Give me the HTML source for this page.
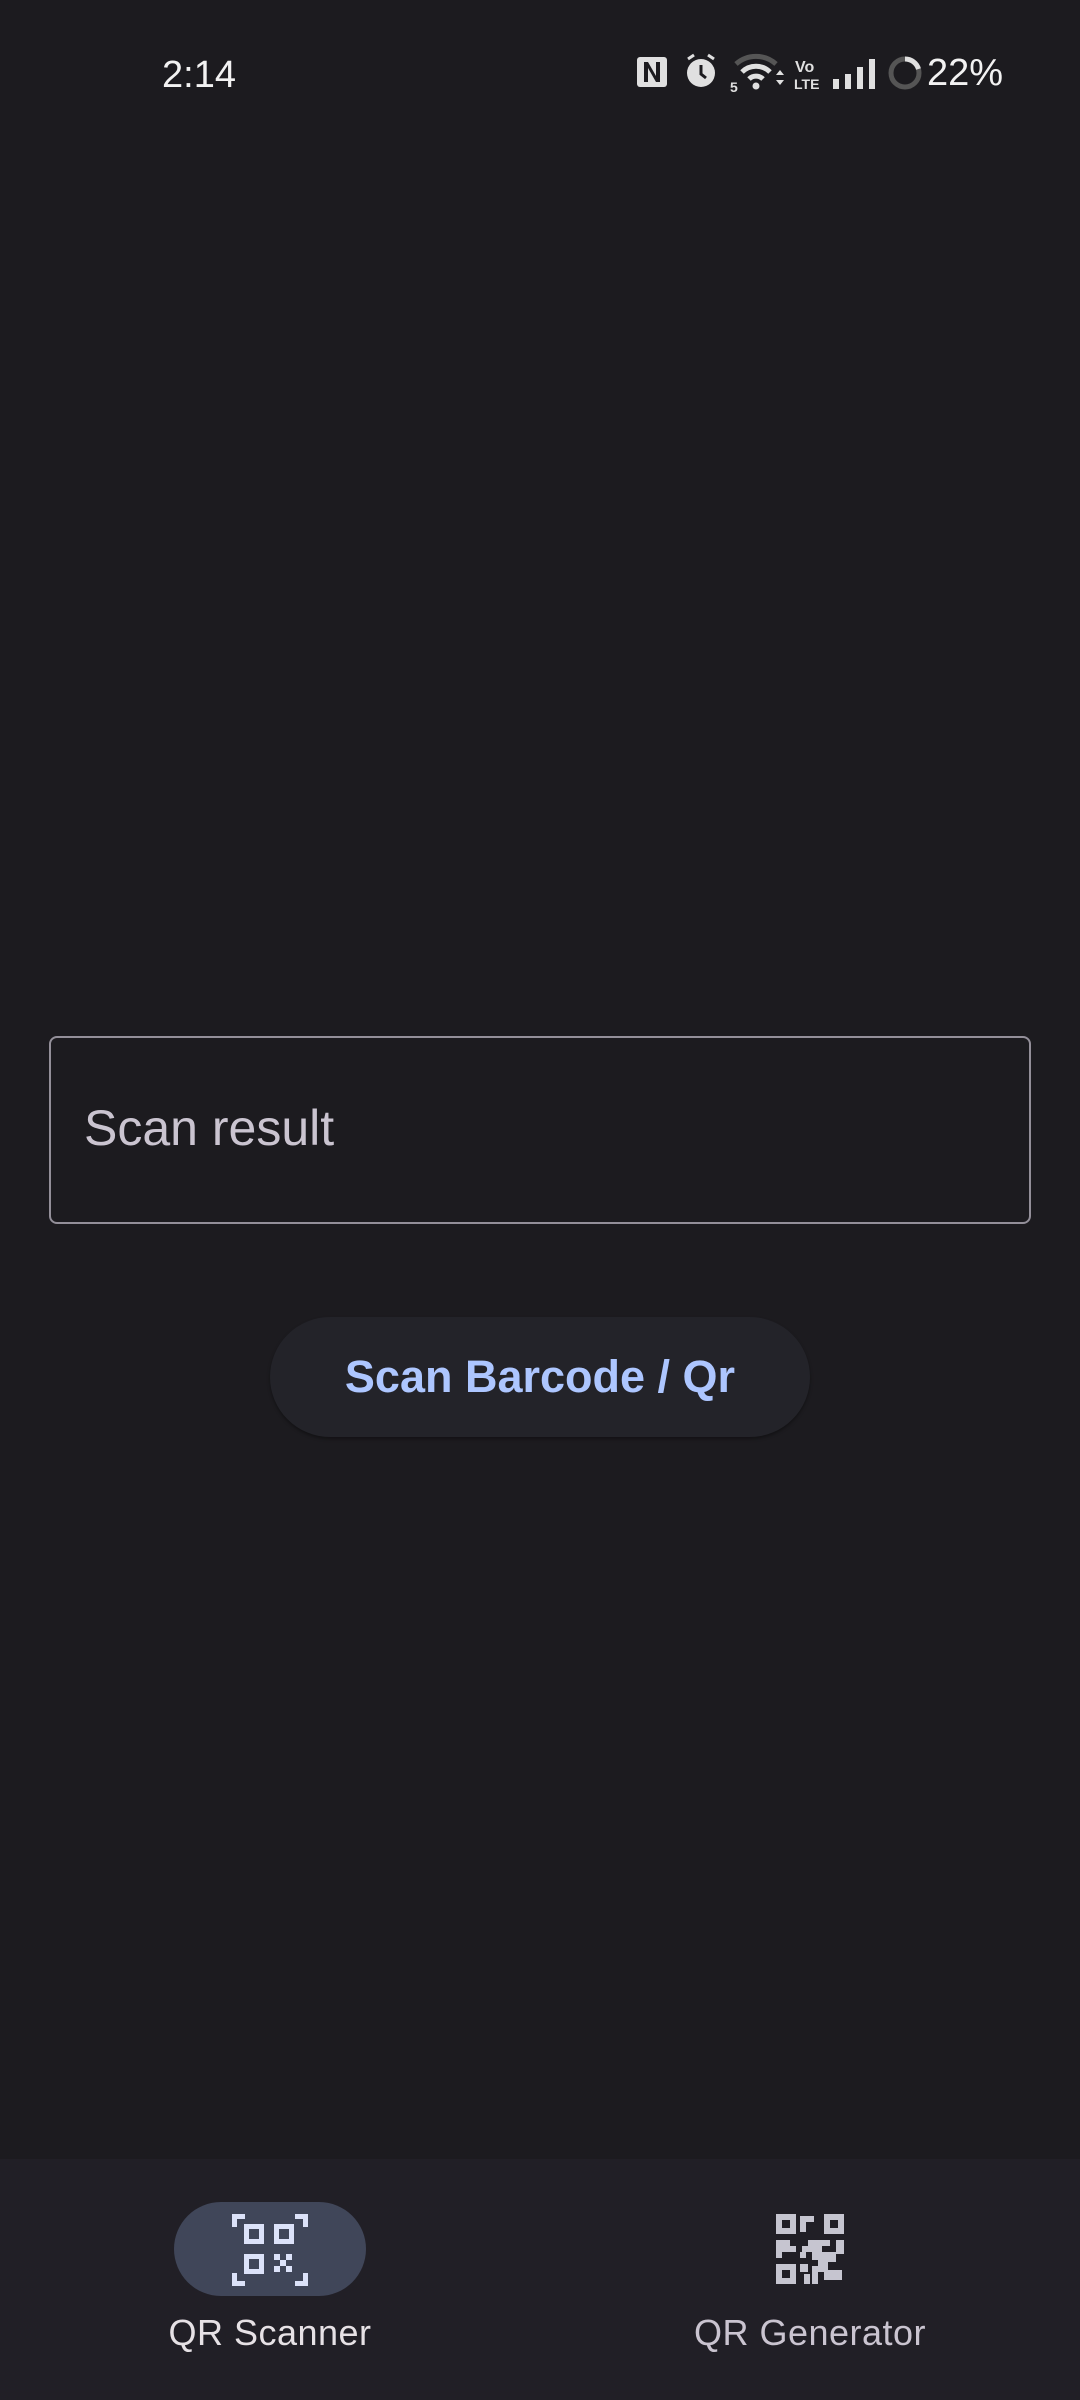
<!DOCTYPE html>
<html><head><meta charset="utf-8"><style>
*{margin:0;padding:0;box-sizing:border-box}
body{width:1080px;height:2400px;background:#1c1b1f;font-family:"Liberation Sans",sans-serif;position:relative;overflow:hidden;color:#e6e1e5}
.abs{position:absolute}
</style></head><body>
<div class="abs" style="left:162px;top:54px;font-size:38px;color:#f2f2f2">2:14</div>
<svg class="abs" style="left:630px;top:52px" width="380" height="46" viewBox="0 0 380 46">
 <rect x="7" y="5" width="30" height="30" rx="3" fill="#e0e0e0"/>
 <path d="M14 30V10h4l8 14V10h4v20h-4l-8-14v14z" fill="#1c1b1f"/>
 <circle cx="71" cy="21" r="14" fill="#e0e0e0"/>
 <path d="M71 13v9l5 4" stroke="#1c1b1f" stroke-width="3" fill="none"/>
 <path d="M58 7l6-4M84 7l-6-4" stroke="#e0e0e0" stroke-width="3"/>
 <path d="M106 12a30 30 0 0 1 40 0" stroke="#555" stroke-width="5" fill="none"/>
 <path d="M112 20a20 20 0 0 1 28 0M119 27a10 10 0 0 1 14 0" stroke="#e0e0e0" stroke-width="5" fill="none"/>
 <circle cx="126" cy="34" r="3.5" fill="#e0e0e0"/>
 <text x="100" y="40" font-size="14" font-weight="bold" fill="#e0e0e0" font-family="Liberation Sans">5</text>
 <path d="M146 23l4-5 4 5zM146 28l4 5 4-5z" fill="#e0e0e0"/>
 <text x="165" y="20" font-size="16" font-weight="bold" fill="#e0e0e0" font-family="Liberation Sans">Vo</text>
 <text x="164" y="37" font-size="14" font-weight="bold" fill="#e0e0e0" font-family="Liberation Sans">LTE</text>
 <rect x="203" y="27" width="6" height="10" fill="#e0e0e0"/><rect x="215" y="22" width="6" height="15" fill="#e0e0e0"/><rect x="227" y="15" width="6" height="22" fill="#e0e0e0"/><rect x="239" y="7" width="6" height="30" fill="#e0e0e0"/>
 <circle cx="275" cy="21" r="14" stroke="#555" stroke-width="5" fill="none"/>
 <path d="M275 7a14 14 0 0 1 13.5 10" stroke="#e0e0e0" stroke-width="5" fill="none"/>
</svg>
<div class="abs" style="left:927px;top:52px;font-size:38px;color:#f2f2f2">22%</div>

<div class="abs" style="left:49px;top:1036px;width:982px;height:188px;border:2px solid #938f99;border-radius:8px"></div>
<div class="abs" style="left:84px;top:1099px;font-size:50px;color:#cac4d0">Scan result</div>

<div class="abs" style="left:270px;top:1317px;width:540px;height:120px;border-radius:60px;background:#232329;box-shadow:0 2px 3px rgba(0,0,0,.35);display:flex;align-items:center;justify-content:center;font-size:45px;font-weight:bold;color:#adc6ff">Scan Barcode / Qr</div>

<div class="abs" style="left:0;top:2159px;width:1080px;height:241px;background:#211f26"></div>
<div class="abs" style="left:174px;top:2202px;width:192px;height:94px;border-radius:47px;background:#404659"></div>
<svg class="abs" style="left:230px;top:2212px" width="80" height="76" viewBox="0 0 80 76">
 <g fill="#dce2f9">
 <path d="M2 2h13v5H7v8H2z"/><path d="M78 2H65v5h8v8h5z"/><path d="M2 74h13v-5H7v-8H2z"/><path d="M78 74H65v-5h8v-8h5z"/>
 <path d="M14 12h20v20H14zM19 17v10h10V17z" fill-rule="evenodd"/>
 <path d="M44 12h20v20H44zM49 17v10h10V17z" fill-rule="evenodd"/>
 <path d="M14 42h20v20H14zM19 47v10h10V47z" fill-rule="evenodd"/>
 <path d="M44 42h6v6h-6zM56 42h6v6h-6zM50 48h6v6h-6zM44 54h6v6h-6zM56 54h6v6h-6z"/>
 </g>
</svg>
<svg class="abs" style="left:776px;top:2214px" width="68" height="70" viewBox="0 0 68 70">
 <g fill="#c6c5d0">
 <path d="M0 0h20v20H0zM6 6v8h8V6z" fill-rule="evenodd"/>
 <path d="M48 0h20v20H48zM54 6v8h8V6z" fill-rule="evenodd"/>
 <path d="M0 50h20v20H0zM6 56v8h8v-8z" fill-rule="evenodd"/>
 <path d="M24 2h14v6h-8v10h-6zM0 26h14v6h6v6h6v-6h6v-6h22v6h-8v6h14v-12h14v22h-6v-8h-8v8h-8v8h14v10H48v-8h-6v12h-6V52h6v-6h-6v-8h-6v6h-6v-6H6v6H0z"/>
 <path d="M24 50h8v8h-8zM28 60h6v10h-6z"/>
 </g>
</svg>
<div class="abs" style="left:0;width:540px;top:2312px;text-align:center;font-size:36px;color:#e6e1e5;letter-spacing:0.5px">QR Scanner</div>
<div class="abs" style="left:540px;width:540px;top:2312px;text-align:center;font-size:36px;color:#cac4d0;letter-spacing:0.5px">QR Generator</div>
</body></html>
